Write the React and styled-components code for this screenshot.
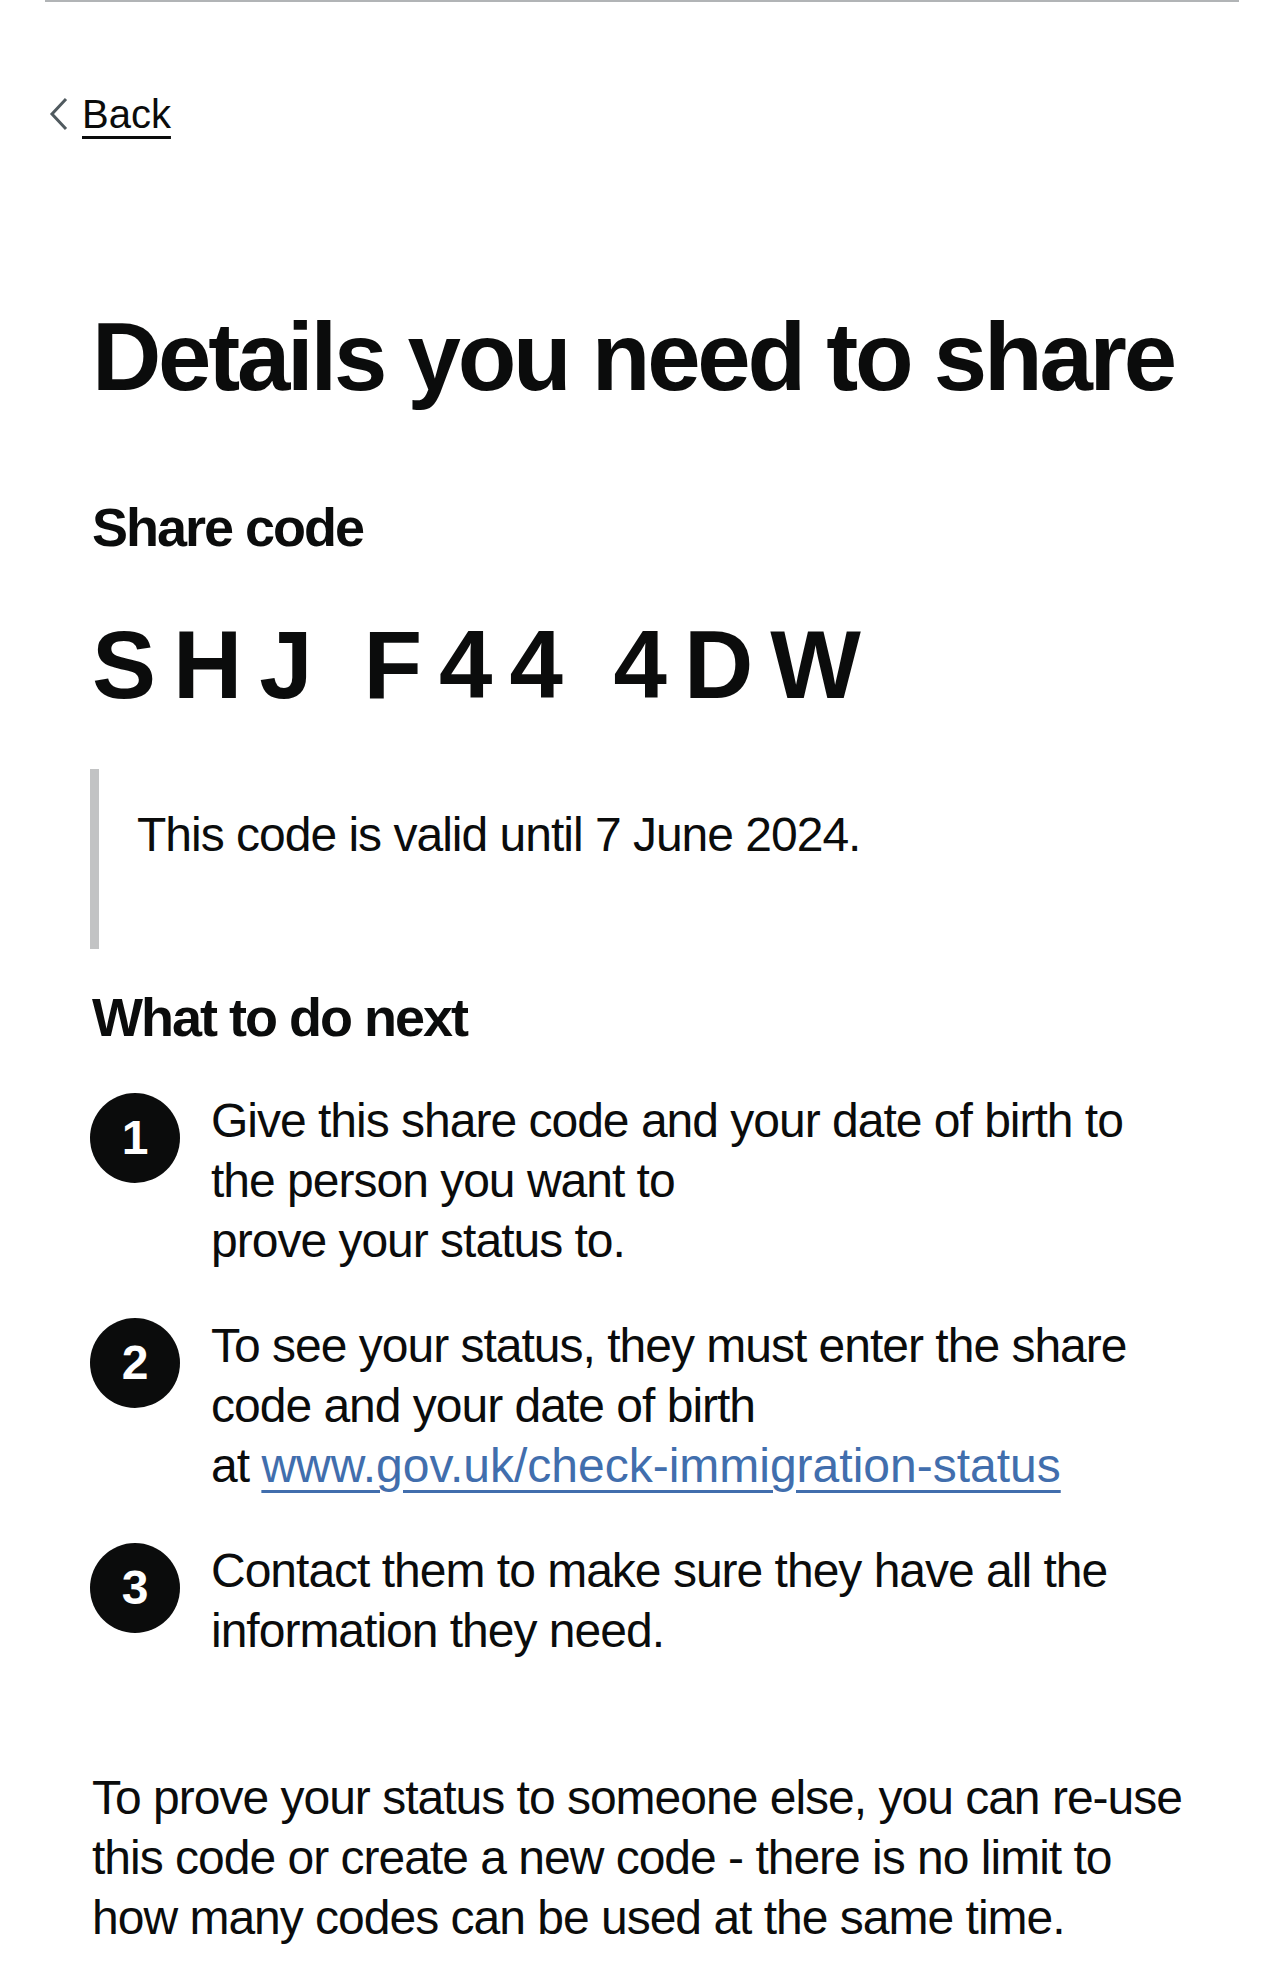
import React from "react";
import styled, { createGlobalStyle } from "styled-components";

const GlobalStyle = createGlobalStyle`
  body {
    margin: 0;
    background: #ffffff;
    color: #0b0c0c;
    font-family: "Liberation Sans", Arial, sans-serif;
    -webkit-font-smoothing: antialiased;
  }
`;

const HeaderRule = styled.div`
  height: 2px;
  margin: 0 45px;
  background: #b1b4b6;
`;

const Nav = styled.nav`
  display: flex;
  padding: 85px 0 0 49px;
`;

const BackLink = styled.a`
  display: flex;
  align-items: center;
  gap: 13px;
  height: 54px;
  font-size: 40px;
  line-height: 54px;
  color: #0b0c0c;
  text-decoration: none;

  span {
    text-decoration: underline;
    text-decoration-thickness: 3px;
    text-underline-offset: 8px;
  }
`;

const Main = styled.main`
  display: flex;
  flex-direction: column;
  padding: 0 92px 24px;
`;

const Title = styled.h1`
  margin: 163px 0 0;
  font-size: 96px;
  line-height: 105px;
  font-weight: 700;
  letter-spacing: -3.25px;
`;

const Heading = styled.h2`
  margin: ${p => p.$top}px 0 0;
  font-size: 54px;
  line-height: 60px;
  font-weight: 700;
  letter-spacing: -2px;
`;

const Code = styled.p`
  margin: 55px 0 0;
  font-size: 96px;
  line-height: 105px;
  font-weight: 700;
  letter-spacing: 17px;
  word-spacing: -10px;
`;

const Inset = styled.div`
  margin: 52px 0 0 -2px;
  padding: 36px 0 84px 38px;
  border-left: 9px solid #c2c3c4;
`;

const Body = styled.p`
  margin: ${p => p.$top || 0}px 0 0;
  font-size: 48px;
  line-height: 60px;
  letter-spacing: -1px;
`;

const Steps = styled.ol`
  display: flex;
  flex-direction: column;
  gap: 45px;
  margin: 44px 0 0 -2px;
  padding: 0;
  list-style: none;
`;

const Step = styled.li`
  display: grid;
  grid-template-columns: 90px 1fr;
  column-gap: 31px;
  align-items: start;
`;

const Badge = styled.span`
  display: flex;
  align-items: center;
  justify-content: center;
  width: 90px;
  height: 90px;
  margin-top: 2px;
  border-radius: 50%;
  background: #0b0c0c;
  color: #ffffff;
  font-size: 48px;
  font-weight: 700;
  line-height: 1;
`;

const Link = styled.a`
  color: #416ead;
  letter-spacing: 0;
  text-decoration: underline;
  text-decoration-thickness: 3px;
  text-underline-offset: 8px;
`;

const Chevron = () => (
  <svg width="20" height="34" viewBox="0 0 20 34" aria-hidden="true">
    <polyline
      points="17,2 3,17 17,32"
      fill="none"
      stroke="#505a5f"
      strokeWidth="3"
      strokeLinejoin="miter"
    />
  </svg>
);

const steps = [
  {
    n: 1,
    body: (
      <>
        Give this share code and your date of birth to the person you want to
        <br />
        prove your status to.
      </>
    )
  },
  {
    n: 2,
    body: (
      <>
        To see your status, they must enter the share code and your date of
        birth
        <br />
        at <Link href="#">www.gov.uk/check-immigration-status</Link>
      </>
    )
  },
  {
    n: 3,
    body: <>Contact them to make sure they have all the information they need.</>
  }
];

export default function App() {
  return (
    <>
      <GlobalStyle />
      <HeaderRule />
      <Nav>
        <BackLink href="#">
          <Chevron />
          <span>Back</span>
        </BackLink>
      </Nav>
      <Main>
        <Title>Details you need to share</Title>
        <Heading $top={88}>Share code</Heading>
        <Code>SHJ F44 4DW</Code>
        <Inset>
          <Body>This code is valid until 7 June 2024.</Body>
        </Inset>
        <Heading $top={38}>What to do next</Heading>
        <Steps>
          {steps.map(step => (
            <Step key={step.n}>
              <Badge>{step.n}</Badge>
              <Body>{step.body}</Body>
            </Step>
          ))}
        </Steps>
        <Body $top={107}>
          To prove your status to someone else, you can re-use this code or
          create a new code - there is no limit to how many codes can be used at
          the same time.
        </Body>
      </Main>
    </>
  );
}
